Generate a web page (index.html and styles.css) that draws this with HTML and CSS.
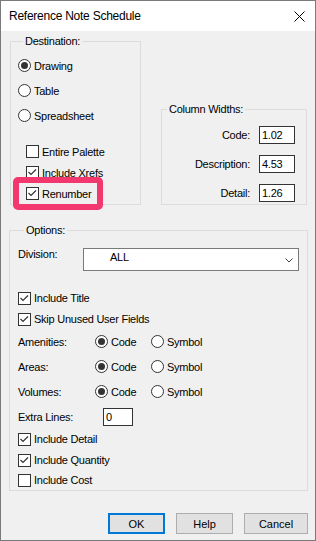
FILE: index.html
```html
<!DOCTYPE html>
<html lang="en">
<head>
  <meta charset="UTF-8">
  <title>Reference Note Schedule</title>
  <link rel="stylesheet" href="styles.css">
</head>
<body>
  <div class="window">
    <div class="titlebar">
      <span class="title">Reference Note Schedule</span>
      <svg class="close" width="11" height="11" viewBox="0 0 11 11">
        <path d="M0.5 0.5 L10.5 10.5 M10.5 0.5 L0.5 10.5" stroke="#000" stroke-width="1" fill="none"/>
      </svg>
    </div>

    <div class="client">
      <div class="top-row">
        <div class="group dest">
          <div class="group-title">Destination:</div>
          <label class="radio-row first"><span class="radio on"></span>Drawing</label>
          <label class="radio-row"><span class="radio"></span>Table</label>
          <label class="radio-row"><span class="radio"></span>Spreadsheet</label>

          <div class="checks">
            <label class="check-row"><span class="box"></span>Entire Palette</label>
            <label class="check-row"><span class="box"><svg width="11" height="11" viewBox="0 0 11 11"><polyline points="1.5,5 4,7.5 9,2.5" fill="none" stroke="#333" stroke-width="1.2"/></svg></span>Include Xrefs</label>
            <div class="check-row">
              <label class="highlight"><span class="box"><svg width="11" height="11" viewBox="0 0 11 11"><polyline points="1.5,5 4,7.5 9,2.5" fill="none" stroke="#333" stroke-width="1.2"/></svg></span>Renumber</label>
            </div>
          </div>
        </div>

        <div class="group widths">
          <div class="group-title">Column Widths:</div>
          <div class="field first"><span>Code:</span><span class="input">1.02</span></div>
          <div class="field"><span>Description:</span><span class="input">4.53</span></div>
          <div class="field"><span>Detail:</span><span class="input">1.26</span></div>
        </div>
      </div>

      <div class="group options">
        <div class="group-title">Options:</div>

        <div class="division">
          <span class="division-label">Division:</span>
          <div class="combo">
            <span class="combo-value">ALL</span>
            <svg class="chevron" width="8" height="5" viewBox="0 0 8 5"><polyline points="0.5,0.5 4,4 7.5,0.5" fill="none" stroke="#444" stroke-width="1"/></svg>
          </div>
        </div>

        <label class="check-row opt title-row"><span class="box"><svg width="11" height="11" viewBox="0 0 11 11"><polyline points="1.5,5 4,7.5 9,2.5" fill="none" stroke="#333" stroke-width="1.2"/></svg></span>Include Title</label>
        <label class="check-row opt tight"><span class="box"><svg width="11" height="11" viewBox="0 0 11 11"><polyline points="1.5,5 4,7.5 9,2.5" fill="none" stroke="#333" stroke-width="1.2"/></svg></span>Skip Unused User Fields</label>

        <div class="choice-row">
          <span>Amenities:</span>
          <label class="choice"><span class="radio on"></span>Code</label>
          <label class="choice"><span class="radio"></span>Symbol</label>
        </div>
        <div class="choice-row">
          <span>Areas:</span>
          <label class="choice"><span class="radio on"></span>Code</label>
          <label class="choice"><span class="radio"></span>Symbol</label>
        </div>
        <div class="choice-row">
          <span>Volumes:</span>
          <label class="choice"><span class="radio on"></span>Code</label>
          <label class="choice"><span class="radio"></span>Symbol</label>
        </div>

        <div class="extra">
          <span class="extra-label">Extra Lines:</span>
          <span class="input small">0</span>
        </div>

        <label class="check-row opt detail-row"><span class="box"><svg width="11" height="11" viewBox="0 0 11 11"><polyline points="1.5,5 4,7.5 9,2.5" fill="none" stroke="#333" stroke-width="1.2"/></svg></span>Include Detail</label>
        <label class="check-row opt tight"><span class="box"><svg width="11" height="11" viewBox="0 0 11 11"><polyline points="1.5,5 4,7.5 9,2.5" fill="none" stroke="#333" stroke-width="1.2"/></svg></span>Include Quantity</label>
        <label class="check-row opt"><span class="box"></span>Include Cost</label>
      </div>

      <div class="buttons">
        <button class="btn default ok">OK</button>
        <button class="btn help">Help</button>
        <button class="btn cancel">Cancel</button>
      </div>
    </div>
  </div>
</body>
</html>
```

FILE: styles.css
```css
body {
  margin: 0;
  font-family: "Liberation Sans", Arial, sans-serif;
  font-size: 11px;
  letter-spacing: -0.25px;
  color: #000;
}

.window {
  width: 316px;
  height: 541px;
  box-sizing: border-box;
  border: 1px solid #7a7a7a;
  background: #f0f0f0;
  display: flex;
  flex-direction: column;
}

.titlebar {
  height: 30px;
  flex: none;
  background: #fff;
  display: flex;
  align-items: center;
  justify-content: space-between;
  padding: 0 10px 0 8px;
}

.title {
  font-size: 12px;
}

.close {
  display: block;
}

.client {
  flex: 1;
  display: flex;
  flex-direction: column;
  padding: 10px 7px 6px 8px;
}

.top-row {
  display: flex;
  align-items: flex-end;
  gap: 20px;
  margin: 0 1px;
}

.group {
  border: 1px solid #dcdcdc;
  box-sizing: border-box;
}

.group-title {
  width: fit-content;
  margin: -8px 0 0 5px;
  padding: 0 2px;
  line-height: 15px;
  background: #f0f0f0;
}

.dest {
  width: 131px;
  padding-left: 7px;
}

.radio-row {
  display: flex;
  align-items: center;
  gap: 3px;
  height: 25px;
}

.radio-row.first {
  margin-top: 4px;
}

.radio {
  flex: none;
  width: 13px;
  height: 13px;
  box-sizing: border-box;
  border: 1px solid #333;
  border-radius: 50%;
  background: #fff;
}

.radio.on::after {
  content: "";
  display: block;
  width: 7px;
  height: 7px;
  margin: 2px;
  border-radius: 50%;
  background: #333;
}

.box {
  flex: none;
  width: 13px;
  height: 13px;
  box-sizing: border-box;
  border: 1px solid #333;
  background: #fff;
}

.box svg {
  display: block;
}

.checks {
  margin: 13px 0 0 8px;
}

.check-row {
  display: flex;
  align-items: center;
  gap: 3px;
  height: 21px;
}

.highlight {
  display: flex;
  align-items: center;
  gap: 3px;
  height: 21px;
  border: 6px solid #f2386e;
  border-radius: 5px;
  margin: -6px 0 -6px -13px;
  padding: 0 6px 0 7px;
}

.widths {
  width: 146px;
  padding: 0 11px 2px 0;
}

.field {
  display: flex;
  justify-content: flex-end;
  align-items: baseline;
  gap: 9px;
  margin-top: 11px;
}

.field.first {
  margin-top: 9px;
}

.input {
  display: block;
  height: 18px;
  box-sizing: border-box;
  border: 1px solid #333;
  background: #fff;
  padding: 1px 0 0 2px;
  line-height: 14px;
  width: 36px;
}

.input.small {
  width: 30px;
}

.options {
  margin-top: 25px;
  padding: 0 8px;
}

.options .group-title {
  margin-left: 6px;
}

.division {
  display: flex;
  margin-top: 10px;
}

.division-label {
  width: 65px;
  line-height: 15px;
  margin-top: -1px;
}

.combo {
  flex: 1;
  height: 23px;
  box-sizing: border-box;
  border: 1px solid #7a7a7a;
  background: #fff;
  display: flex;
  justify-content: space-between;
  padding: 1px 5px 0 26px;
  line-height: 15px;
}

.chevron {
  align-self: center;
  margin-top: 1px;
}

.check-row.opt {
  height: 20px;
}

.check-row.title-row {
  margin-top: 17px;
}

.check-row.tight {
  margin-top: 1px;
}

.check-row.detail-row {
  margin-top: 3px;
}

.choice-row {
  display: grid;
  grid-template-columns: 77px 56px auto;
  align-items: center;
  height: 25px;
}

.choice {
  display: flex;
  align-items: center;
  gap: 3px;
}

.extra {
  display: flex;
  align-items: baseline;
  margin-top: 4px;
}

.extra-label {
  width: 85px;
}

.buttons {
  display: flex;
  justify-content: flex-end;
  gap: 11px;
  margin-top: auto;
}

.btn {
  height: 21px;
  box-sizing: border-box;
  border: 1px solid #adadad;
  background: #e1e1e1;
  font: inherit;
  color: #000;
  padding: 0;
}

.btn.default {
  border: 2px solid #0078d7;
}

.ok, .help {
  width: 57px;
}

.cancel {
  width: 64px;
}
```
